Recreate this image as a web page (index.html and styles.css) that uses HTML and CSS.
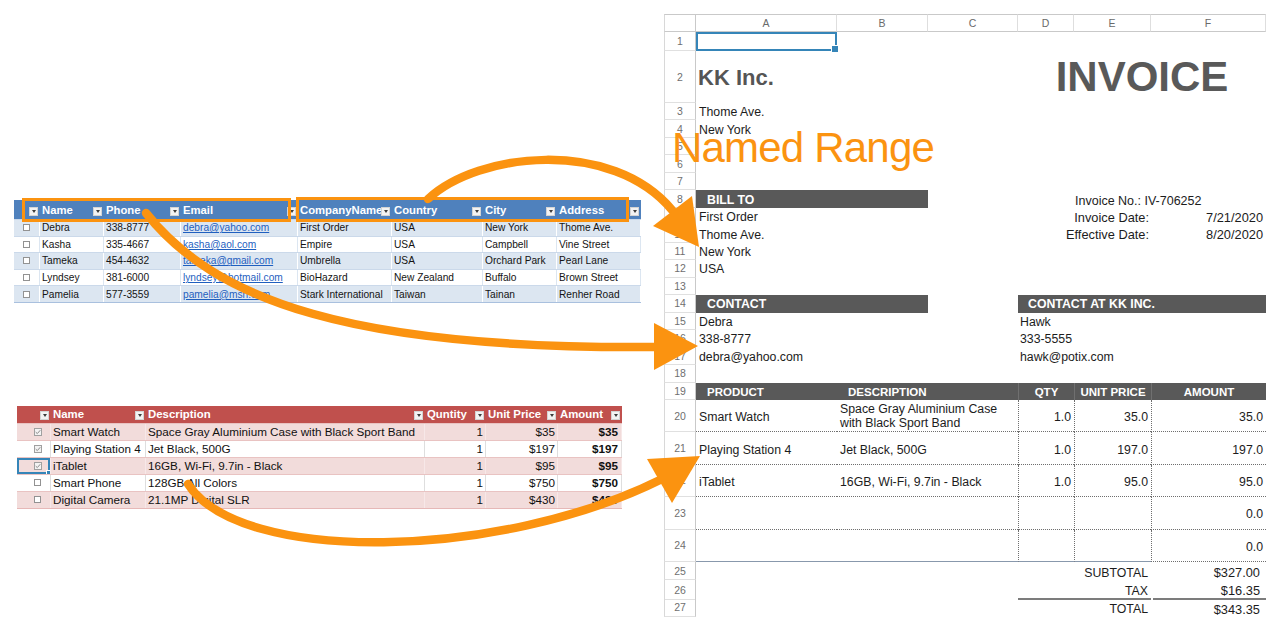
FILE: index.html
```html
<!DOCTYPE html>
<html>
<head>
<meta charset="utf-8">
<title>Named Range</title>
<link rel="stylesheet" href="styles.css">
</head>
<body>
<div class="page">
  <div class="left">
    <div class="bt">
      <div class="row head">
        <div class="hc"><span class="t"></span><span class="dd"></span></div>
        <div class="hc"><span class="t">Name</span><span class="dd"></span></div>
        <div class="hc"><span class="t">Phone</span><span class="dd"></span></div>
        <div class="hc"><span class="t">Email</span><span class="dd"></span></div>
        <div class="hc"><span class="t">CompanyName</span><span class="dd"></span></div>
        <div class="hc"><span class="t">Country</span><span class="dd"></span></div>
        <div class="hc"><span class="t">City</span><span class="dd"></span></div>
        <div class="hc"><span class="t">Address</span><span class="dd"></span></div>
      </div>
      <div class="row body odd">
        <div class="bc cb"><span class="box"></span></div><div class="bc">Debra</div><div class="bc">338-8777</div><div class="bc"><span class="lnk">debra@yahoo.com</span></div><div class="bc">First Order</div><div class="bc">USA</div><div class="bc">New York</div><div class="bc">Thome Ave.</div>
      </div>
      <div class="row body even">
        <div class="bc cb"><span class="box"></span></div><div class="bc">Kasha</div><div class="bc">335-4667</div><div class="bc"><span class="lnk">kasha@aol.com</span></div><div class="bc">Empire</div><div class="bc">USA</div><div class="bc">Campbell</div><div class="bc">Vine Street</div>
      </div>
      <div class="row body odd">
        <div class="bc cb"><span class="box"></span></div><div class="bc">Tameka</div><div class="bc">454-4632</div><div class="bc"><span class="lnk">tameka@gmail.com</span></div><div class="bc">Umbrella</div><div class="bc">USA</div><div class="bc">Orchard Park</div><div class="bc">Pearl Lane</div>
      </div>
      <div class="row body even">
        <div class="bc cb"><span class="box"></span></div><div class="bc">Lyndsey</div><div class="bc">381-6000</div><div class="bc"><span class="lnk">lyndsey@hotmail.com</span></div><div class="bc">BioHazard</div><div class="bc">New Zealand</div><div class="bc">Buffalo</div><div class="bc">Brown Street</div>
      </div>
      <div class="row body odd">
        <div class="bc cb"><span class="box"></span></div><div class="bc">Pamelia</div><div class="bc">577-3559</div><div class="bc"><span class="lnk">pamelia@msn.com</span></div><div class="bc">Stark International</div><div class="bc">Taiwan</div><div class="bc">Tainan</div><div class="bc">Renher Road</div>
      </div>
    </div>

    <div class="rt">
      <div class="row head">
        <div class="hc"><span class="t"></span><span class="dd"></span></div>
        <div class="hc"><span class="t">Name</span><span class="dd"></span></div>
        <div class="hc"><span class="t">Description</span><span class="dd"></span></div>
        <div class="hc"><span class="t">Quntity</span><span class="dd"></span></div>
        <div class="hc"><span class="t">Unit Price</span><span class="dd"></span></div>
        <div class="hc"><span class="t">Amount</span><span class="dd"></span></div>
      </div>
      <div class="row body pink">
        <div class="bc cb"><svg class="ck" width="8" height="8" viewBox="0 0 8 8"><rect x="0.5" y="0.5" width="7" height="7" fill="#f3f3f3" stroke="#a0a0a0"/><path d="M1.7 4.1 L3.3 5.6 L6.3 2.2" fill="none" stroke="#8c8c8c" stroke-width="1"/></svg></div>
        <div class="bc">Smart Watch</div><div class="bc">Space Gray Aluminium Case with Black Sport Band</div><div class="bc num">1</div><div class="bc num">$35</div><div class="bc num amt">$35</div>
      </div>
      <div class="row body white">
        <div class="bc cb"><svg class="ck" width="8" height="8" viewBox="0 0 8 8"><rect x="0.5" y="0.5" width="7" height="7" fill="#f3f3f3" stroke="#a0a0a0"/><path d="M1.7 4.1 L3.3 5.6 L6.3 2.2" fill="none" stroke="#8c8c8c" stroke-width="1"/></svg></div>
        <div class="bc">Playing Station 4</div><div class="bc">Jet Black, 500G</div><div class="bc num">1</div><div class="bc num">$197</div><div class="bc num amt">$197</div>
      </div>
      <div class="row body pink">
        <div class="bc cb selcell"><svg class="ck" width="8" height="8" viewBox="0 0 8 8"><rect x="0.5" y="0.5" width="7" height="7" fill="#f3f3f3" stroke="#a0a0a0"/><path d="M1.7 4.1 L3.3 5.6 L6.3 2.2" fill="none" stroke="#8c8c8c" stroke-width="1"/></svg></div>
        <div class="bc">iTablet</div><div class="bc">16GB, Wi-Fi, 9.7in - Black</div><div class="bc num">1</div><div class="bc num">$95</div><div class="bc num amt">$95</div>
      </div>
      <div class="row body white">
        <div class="bc cb"><span class="box"></span></div>
        <div class="bc">Smart Phone</div><div class="bc">128GB All Colors</div><div class="bc num">1</div><div class="bc num">$750</div><div class="bc num amt">$750</div>
      </div>
      <div class="row body pink">
        <div class="bc cb"><span class="box"></span></div>
        <div class="bc">Digital Camera</div><div class="bc">21.1MP Digital SLR</div><div class="bc num">1</div><div class="bc num">$430</div><div class="bc num amt">$430</div>
      </div>
    </div>
  </div>

  <div class="sheet">
    <div class="srow hdr"><div class="corner"></div><div class="ch">A</div><div class="ch">B</div><div class="ch">C</div><div class="ch">D</div><div class="ch">E</div><div class="ch">F</div></div>
    <div class="srow r1"><div class="rn">1</div><div class="c gA sel"></div></div>
    <div class="srow r2"><div class="rn">2</div><div class="c gA kk">KK Inc.</div><div class="c gDF invoice">INVOICE</div></div>
    <div class="srow"><div class="rn">3</div><div class="c gA">Thome Ave.</div></div>
    <div class="srow"><div class="rn">4</div><div class="c gA">New York</div></div>
    <div class="srow"><div class="rn">5</div></div>
    <div class="srow"><div class="rn">6</div></div>
    <div class="srow"><div class="rn">7</div></div>
    <div class="srow"><div class="rn">8</div><div class="c gAB bar">BILL TO</div><div class="c gEF invno">Invoice No.: IV-706252</div></div>
    <div class="srow"><div class="rn">9</div><div class="c gA">First Order</div><div class="c gCE right lbl">Invoice Date:</div><div class="c gF right val">7/21/2020</div></div>
    <div class="srow"><div class="rn">10</div><div class="c gA">Thome Ave.</div><div class="c gCE right lbl">Effective Date:</div><div class="c gF right val">8/20/2020</div></div>
    <div class="srow"><div class="rn">11</div><div class="c gA">New York</div></div>
    <div class="srow"><div class="rn">12</div><div class="c gA">USA</div></div>
    <div class="srow"><div class="rn">13</div></div>
    <div class="srow"><div class="rn">14</div><div class="c gAB bar">CONTACT</div><div class="c gDF bar">CONTACT AT KK INC.</div></div>
    <div class="srow"><div class="rn">15</div><div class="c gA">Debra</div><div class="c gDF hawk">Hawk</div></div>
    <div class="srow"><div class="rn">16</div><div class="c gA">338-8777</div><div class="c gDF hawk">333-5555</div></div>
    <div class="srow"><div class="rn">17</div><div class="c gA">debra@yahoo.com</div><div class="c gDF hawk">hawk@potix.com</div></div>
    <div class="srow"><div class="rn">18</div></div>
    <div class="srow"><div class="rn">19</div><div class="c gA th">PRODUCT</div><div class="c gBC th">DESCRIPTION</div><div class="c gD th mid sep">QTY</div><div class="c gE th mid sep">UNIT PRICE</div><div class="c gF th mid sep">AMOUNT</div></div>
    <div class="srow item"><div class="rn">20</div><div class="c gA it">Smart Watch</div><div class="c gBC it desc">Space Gray Aluminium Case<br>with Black Sport Band</div><div class="c gD it vl right">1.0</div><div class="c gE it vl right">35.0</div><div class="c gF it vl right">35.0</div></div>
    <div class="srow item"><div class="rn">21</div><div class="c gA it">Playing Station 4</div><div class="c gBC it">Jet Black, 500G</div><div class="c gD it vl right">1.0</div><div class="c gE it vl right">197.0</div><div class="c gF it vl right">197.0</div></div>
    <div class="srow item"><div class="rn">22</div><div class="c gA it">iTablet</div><div class="c gBC it">16GB, Wi-Fi, 9.7in - Black</div><div class="c gD it vl right">1.0</div><div class="c gE it vl right">95.0</div><div class="c gF it vl right">95.0</div></div>
    <div class="srow item"><div class="rn">23</div><div class="c gA it"></div><div class="c gBC it"></div><div class="c gD it vl right"></div><div class="c gE it vl right"></div><div class="c gF it vl right">0.0</div></div>
    <div class="srow item"><div class="rn">24</div><div class="c gA it solid"></div><div class="c gBC it solid"></div><div class="c gD it vl right solid"></div><div class="c gE it vl right solid"></div><div class="c gF it vl right">0.0</div></div>
    <div class="srow ft"><div class="rn">25</div><div class="c gDE right">SUBTOTAL</div><div class="c gF right tv">$327.00</div></div>
    <div class="srow ft"><div class="rn">26</div><div class="c gDE right ul">TAX</div><div class="c gF right tv ul ulf">$16.35</div></div>
    <div class="srow ft"><div class="rn">27</div><div class="c gDE right">TOTAL</div><div class="c gF right tv">$343.35</div></div>
  </div>
</div>

<div class="named">Named Range</div>

<svg class="overlay" width="1270" height="639" viewBox="0 0 1270 639">
  <g fill="none" stroke="#fb9310" stroke-width="3">
    <rect x="23.5" y="199.5" width="266" height="21"/>
    <rect x="297.5" y="198.5" width="330" height="22"/>
  </g>
  <g fill="none" stroke="#fb9310" stroke-width="8.5" stroke-linecap="round">
    <path d="M428,199 C478,152 612,138 672,210"/>
    <path d="M146,213 C215,300 350,350 660,347"/>
    <path d="M188,484 C240,565 500,560 662,479"/>
  </g>
  <g fill="#fb9310">
    <polygon points="699,247 653,226 692,196"/>
    <polygon points="698,346 654,323 654,370"/>
    <polygon points="700,456 647,459 672,503"/>
  </g>
</svg>
</body>
</html>
```

FILE: styles.css
```css
* { box-sizing: border-box; margin: 0; padding: 0; }
html, body { width: 1270px; height: 639px; }
body {
  position: relative;
  overflow: hidden;
  background: #ffffff;
  font-family: "Liberation Sans", Arial, sans-serif;
  color: #141414;
}
.page { display: flex; align-items: flex-start; }
.left {
  width: 664px;
  padding: 200px 0 0 14px;
  display: flex;
  flex-direction: column;
  align-items: flex-start;
}

/* ---------- shared excel-table bits ---------- */
.row { display: grid; grid-template-rows: 1fr; }
.hc {
  display: flex;
  align-items: center;
  min-width: 0;
  padding-left: 2px;
  color: #ffffff;
  font-weight: bold;
  white-space: nowrap;
  overflow: hidden;
}
.hc .t { flex: 1 1 auto; min-width: 0; overflow: hidden; }
.dd {
  flex: none;
  width: 9px;
  height: 9px;
  margin: 3px 2px 0 0;
  background: #f3f3f3;
  border: 1px solid #d4d4d4;
  display: flex;
  align-items: center;
  justify-content: center;
}
.dd::after {
  content: "";
  border-left: 2.5px solid transparent;
  border-right: 2.5px solid transparent;
  border-top: 3px solid #3c3c3c;
}
.bc {
  display: flex;
  align-items: center;
  min-width: 0;
  padding-left: 2px;
  white-space: nowrap;
  overflow: hidden;
}
.cb { justify-content: center; padding-left: 0; }
.box {
  width: 7px;
  height: 7px;
  border: 1px solid #929292;
  background: #ffffff;
}
.lnk { color: #1f5fbf; text-decoration: underline; }
.num { justify-content: flex-end; padding-left: 0; padding-right: 2px; }
.amt { font-weight: bold; padding-right: 3px; }

/* ---------- blue table ---------- */
.bt { width: 627px; border-bottom: 1px solid #a9c0de; }
.bt .row { grid-template-columns: 26px 64px 77px 117px 94px 91px 74px 84px; }
.bt .head { height: 19px; background: #4f81bd; }
.bt .hc { font-size: 11.3px; }
.bt .body { height: 16.6px; border-top: 1px solid #cbd9ea; }
.bt .bc { font-size: 10.2px; }
.bt .odd { background: #dce6f1; }
.bt .odd .bc { border-right: 1px solid #ffffff; }
.bt .even .bc { border-right: 1px solid #dce6f1; }

/* ---------- red table ---------- */
.rt { width: 605px; margin: 103px 0 0 3px; border-bottom: 1px solid #e6b8b7; }
.rt .row { grid-template-columns: 34px 95px 279px 61px 72px 64px; }
.rt .head { height: 17px; background: #c0504d; }
.rt .hc { font-size: 11.4px; }
.rt .body { height: 17px; border-top: 1px solid #e9c3c2; }
.rt .bc { font-size: 11.7px; color: #111111; }
.rt .pink { background: #f2dcdb; }
.rt .pink .bc { border-right: 1px solid #f7e8e8; }
.rt .white .bc { border-right: 1px solid #dedede; }
.rt .cb { justify-content: flex-start; padding-left: 17px; }
.ck { display: block; }
.selcell { position: relative; box-shadow: inset 0 0 0 2px #3585b8; }
.selcell::after {
  content: "";
  position: absolute;
  right: -3px;
  bottom: -3px;
  width: 5px;
  height: 5px;
  background: #3585b8;
  border: 1px solid #ffffff;
}

/* ---------- invoice sheet ---------- */
.sheet { width: 602px; margin-top: 14px; font-size: 12.3px; color: #1c1c1c; }
.srow {
  display: grid;
  grid-template-columns: 32px 141px 91px 90px 56px 77px 115px;
  grid-template-rows: 1fr;
  height: 17.47px;
}
.srow.hdr { height: 18px; }
.srow.r1 { height: 19px; }
.srow.r2 { height: 52px; }
.srow.item { height: 32.4px; }
.srow.ft { height: 18.33px; }

.corner {
  grid-column: 1;
  border: 1px solid #c9c9c9;
  border-left-color: #d8d8d8;
}
.ch {
  display: flex;
  align-items: center;
  justify-content: center;
  font-size: 10.5px;
  color: #6a6a6a;
  border-top: 1px solid #c9c9c9;
  border-bottom: 1px solid #c9c9c9;
  border-right: 1px solid #dedede;
}
.rn {
  grid-column: 1;
  display: flex;
  align-items: center;
  justify-content: center;
  font-size: 10.5px;
  color: #6f6f6f;
  border-left: 1px solid #d8d8d8;
  border-right: 1px solid #c9c9c9;
  border-bottom: 1px solid #e0e0e0;
}
.c {
  display: flex;
  align-items: center;
  min-width: 0;
  padding: 1px 3px 0;
  white-space: nowrap;
}
.gA { grid-column: 2; }
.gAB { grid-column: 2 / 4; }
.gBC { grid-column: 3 / 5; }
.gCE { grid-column: 4 / 7; }
.gD { grid-column: 5; }
.gDE { grid-column: 5 / 7; }
.gDF { grid-column: 5 / 8; }
.gE { grid-column: 6; }
.gEF { grid-column: 6 / 8; }
.gF { grid-column: 7; }

.sel { position: relative; border: 2px solid #3585b8; }
.sel::after {
  content: "";
  position: absolute;
  right: -4px;
  bottom: -4px;
  width: 6px;
  height: 6px;
  background: #3585b8;
  border: 1px solid #ffffff;
}
.kk { font-size: 22px; font-weight: bold; color: #555555; padding-left: 2px; }
.invoice { justify-content: center; font-size: 42px; font-weight: bold; color: #595959; padding: 0; }
.bar {
  background: #595959;
  color: #ffffff;
  font-weight: bold;
  font-size: 12.3px;
  padding-left: 10px;
}
.gAB.bar { padding-left: 11px; }
.invno { padding: 3px 0 0 1px; font-size: 12.5px; }
.lbl { font-size: 12.8px; padding-right: 2px; }
.right { justify-content: flex-end; }
.val { padding-right: 3px; font-size: 12.8px; }
.hawk { padding-left: 2px; }
.th {
  background: #595959;
  color: #ffffff;
  font-weight: bold;
  font-size: 11.5px;
  padding-left: 11px;
}
.th.mid { justify-content: center; padding: 1px 0 0; }
.th.sep { border-left: 1px solid #707070; }
.it { border-bottom: 1px dotted #6e6e6e; padding-top: 3px; }
.it.vl { border-left: 1px dotted #6e6e6e; }
.it.right { padding-right: 3px; }
.it.solid { border-bottom: 1px solid #8898ac; }
.desc { white-space: normal; line-height: 14px; padding-top: 1px; }
.srow.ft .c { padding-top: 3px; }
.tv { padding-right: 6px; font-size: 12.8px; }
.ul { border-bottom: 2px solid #7c7c7c; }
.ulf { margin-left: 2px; }

/* ---------- overlays ---------- */
.named {
  position: absolute;
  left: 672px;
  top: 127px;
  font-size: 42px;
  line-height: 1;
  letter-spacing: -0.8px;
  color: #fb9310;
  white-space: nowrap;
}
.overlay {
  position: absolute;
  left: 0;
  top: 0;
  width: 1270px;
  height: 639px;
  pointer-events: none;
}
```
